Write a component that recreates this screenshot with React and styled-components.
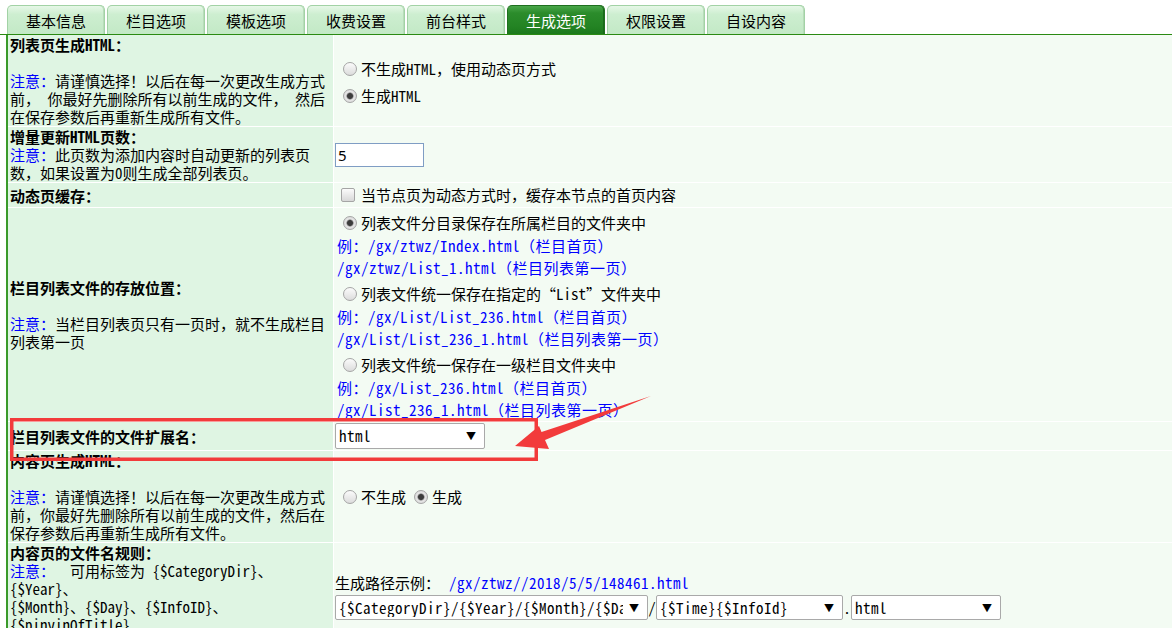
import React from 'react';
import styled, { createGlobalStyle } from 'styled-components';

const GlobalStyle = createGlobalStyle`
  html, body {
    margin: 0;
    padding: 0;
    background: #fff;
  }
  body {
    font-family: "Noto Sans Mono CJK SC", "Noto Sans CJK SC", monospace;
    font-size: 15px;
    color: #000;
  }
`;

const tabs = ['基本信息', '栏目选项', '模板选项', '收费设置', '前台样式', '生成选项', '权限设置', '自设内容'];

const App = () => {
  return (
    <Page>
      <GlobalStyle />
      <TabBar>
        {tabs.map((t) => (
          <Tab key={t} $active={t === '生成选项'}>{t}</Tab>
        ))}
      </TabBar>

      <Form>
        {/* 列表页生成HTML */}
        <Row>
          <Label>
            <div>
              <b>列表页生成HTML：</b><br /><br />
              <Note>注意：</Note>请谨慎选择！以后在每一次更改生成方式<br />
              前， 你最好先删除所有以前生成的文件， 然后<br />
              在保存参数后再重新生成所有文件。
            </div>
          </Label>
          <Field>
            <div>
              <RadioLine><Radio />不生成HTML，使用动态页方式</RadioLine>
              <RadioLine><Radio $checked />生成HTML</RadioLine>
            </div>
          </Field>
        </Row>

        {/* 增量更新 */}
        <Row>
          <Label>
            <div>
              <b>增量更新HTML页数：</b><br />
              <Note>注意：</Note>此页数为添加内容时自动更新的列表页<br />
              数，如果设置为0则生成全部列表页。
            </div>
          </Label>
          <Field>
            <TextBox>5</TextBox>
          </Field>
        </Row>

        {/* 动态页缓存 */}
        <Row>
          <Label>
            <div><b>动态页缓存：</b></div>
          </Label>
          <Field>
            <CheckLine><Check />当节点页为动态方式时，缓存本节点的首页内容</CheckLine>
          </Field>
        </Row>

        {/* 存放位置 */}
        <Row>
          <Label>
            <div>
              <b>栏目列表文件的存放位置：</b><br /><br />
              <Note>注意：</Note>当栏目列表页只有一页时，就不生成栏目<br />
              列表第一页
            </div>
          </Label>
          <Field>
            <div>
              <RadioLine><Radio $checked />列表文件分目录保存在所属栏目的文件夹中</RadioLine>
              <LinkLine>例：/gx/ztwz/Index.html（栏目首页）</LinkLine>
              <LinkLine>/gx/ztwz/List_1.html（栏目列表第一页）</LinkLine>
              <RadioLine><Radio />列表文件统一保存在指定的“List”文件夹中</RadioLine>
              <LinkLine>例：/gx/List/List_236.html（栏目首页）</LinkLine>
              <LinkLine>/gx/List/List_236_1.html（栏目列表第一页）</LinkLine>
              <RadioLine><Radio />列表文件统一保存在一级栏目文件夹中</RadioLine>
              <LinkLine>例：/gx/List_236.html（栏目首页）</LinkLine>
              <LinkLine>/gx/List_236_1.html（栏目列表第一页）</LinkLine>
            </div>
          </Field>
        </Row>

        {/* 扩展名 */}
        <Row>
          <Label>
            <div><b>栏目列表文件的文件扩展名：</b></div>
          </Label>
          <Field>
            <SelectBox $w={150} $h={26}>
              <SelectText>html</SelectText>
              <Arrow>▼</Arrow>
            </SelectBox>
          </Field>
        </Row>

        {/* 内容页生成HTML */}
        <Row>
          <Label>
            <div>
              <b>内容页生成HTML：</b><br /><br />
              <Note>注意：</Note>请谨慎选择！以后在每一次更改生成方式<br />
              前，你最好先删除所有以前生成的文件，然后在<br />
              保存参数后再重新生成所有文件。
            </div>
          </Label>
          <Field>
            <InlineRadios>
              <Radio />不生成
              <Radio $checked />生成
            </InlineRadios>
          </Field>
        </Row>

        {/* 文件名规则 */}
        <Row>
          <Label>
            <div>
              <b>内容页的文件名规则：</b><br />
              <Note>注意：</Note>&nbsp; 可用标签为 {'{$CategoryDir}'}、<br />
              {'{$Year}'}、<br />
              {'{$Month}'}、{'{$Day}'}、{'{$InfoID}'}、<br />
              {'{$pinyinOfTitle}'}、<br />
              {'{$Time}'}
            </div>
          </Label>
          <Field>
            <div>
              <PathLine>生成路径示例：<PathLink>/gx/ztwz//2018/5/5/148461.html</PathLink></PathLine>
              <SelectRow>
                <SelectBox $w={313} $h={25}>
                  <SelectText>{'{$CategoryDir}/{$Year}/{$Month}/{$Day}'}</SelectText>
                  <Arrow>▼</Arrow>
                </SelectBox>
                <Sep>/</Sep>
                <SelectBox $w={187} $h={25}>
                  <SelectText>{'{$Time}{$InfoId}'}</SelectText>
                  <Arrow>▼</Arrow>
                </SelectBox>
                <Sep>.</Sep>
                <SelectBox $w={150} $h={25}>
                  <SelectText>html</SelectText>
                  <Arrow>▼</Arrow>
                </SelectBox>
              </SelectRow>
            </div>
          </Field>
        </Row>
      </Form>

      <Markup width="1172" height="628" viewBox="0 0 1172 628">
        <rect x="11.75" y="419.75" width="524.5" height="39.5" fill="none" stroke="#f23b3b" strokeWidth="3.5" />
        <polygon
          points="515,446 539,426 541.5,432 651,396 545,440 549,449"
          fill="#f23b3b"
        />
      </Markup>
    </Page>
  );
};

export default App;

const Page = styled.div`
  position: relative;
  width: 1172px;
  height: 628px;
  overflow: hidden;
`;

const TabBar = styled.div`
  display: flex;
  gap: 2px;
  padding: 5px 0 0 7px;
  border-bottom: 1px solid #2a8a12;
`;

const Tab = styled.div`
  box-sizing: border-box;
  width: 98px;
  height: 29px;
  display: flex;
  align-items: center;
  justify-content: center;
  font-family: "Noto Sans CJK SC", sans-serif;
  font-size: 15px;
  border: 1px solid ${(p) => (p.$active ? '#1f6f1f' : '#a2d2a5')};
  border-bottom: none;
  border-radius: 5px 5px 0 0;
  color: ${(p) => (p.$active ? '#fff' : '#000')};
  background: ${(p) =>
    p.$active
      ? 'linear-gradient(#4aa64a 0%, #2b8c2b 25%, #248424 70%, #1c7a1c 100%)'
      : 'linear-gradient(#e6f7e7 0%, #cdeed0 30%, #c3e9c6 100%)'};
  box-shadow: inset -1px 0 0 ${(p) => (p.$active ? '#1a6a1a' : '#b8dcba')};
`;

const Form = styled.div`
  margin-left: 6px;
  border-left: 2px solid #3a9a2a;
`;

const Row = styled.div`
  display: grid;
  grid-template-columns: 325px 1fr;
  column-gap: 1px;
  background: #fff;
  border-bottom: 1px solid #fff;
`;

const Label = styled.div`
  display: flex;
  align-items: center;
  background: #dff5e3;
  padding: 1px 2px 0 2px;
  line-height: 18px;
  white-space: nowrap;
  b {
    font-weight: bold;
  }
`;

const Field = styled.div`
  display: flex;
  align-items: center;
  background: #f3fbf3;
  padding-left: 1px;
  line-height: 18px;
  white-space: nowrap;
`;

const Note = styled.span`
  color: #0000ff;
`;

const RadioLine = styled.div`
  display: flex;
  align-items: center;
  height: 24px;
  margin-top: 3px;
`;

const Radio = styled.span`
  box-sizing: border-box;
  display: inline-block;
  width: 14px;
  height: 14px;
  margin: 0 4px 0 8px;
  border-radius: 50%;
  border: 1px solid #a5a5a5;
  background: ${(p) =>
    p.$checked
      ? 'radial-gradient(circle, #3c3c3c 0 2.5px, #8a8a8a 3.2px, #e6e6e6 4px, #d2d2d2 100%)'
      : 'linear-gradient(#fbfbfb, #dcdcdc)'};
`;

const Check = styled.span`
  box-sizing: border-box;
  display: inline-block;
  width: 14px;
  height: 14px;
  margin: 0 6px 0 6px;
  border-radius: 2px;
  border: 1px solid #a5a5a5;
  background: linear-gradient(#fbfbfb, #d8d8d8);
`;

const CheckLine = styled.div`
  display: flex;
  align-items: center;
  height: 24px;
`;

const LinkLine = styled.div`
  height: 22px;
  line-height: 22px;
  padding-left: 2px;
  letter-spacing: 0.5px;
  color: #0000ff;
`;

const InlineRadios = styled.div`
  display: flex;
  align-items: center;
  height: 24px;
`;

const TextBox = styled.div`
  box-sizing: border-box;
  width: 89px;
  height: 24px;
  border: 1px solid #7f9dc4;
  background: #fff;
  padding-left: 2px;
  line-height: 22px;
  font-family: "Noto Sans", sans-serif;
`;

const SelectBox = styled.div`
  box-sizing: border-box;
  display: flex;
  align-items: center;
  width: ${(p) => p.$w}px;
  height: ${(p) => p.$h}px;
  margin: 1px 0;
  padding: 0 8px 0 3px;
  border: 1px solid #a9a9a9;
  border-radius: 2px;
  background: #fff;
`;

const SelectText = styled.span`
  flex: 1;
  overflow: hidden;
  white-space: nowrap;
  letter-spacing: 0.5px;
`;

const Arrow = styled.span`
  margin-left: 6px;
  font-size: 10px;
  color: #000;
`;

const PathLine = styled.div`
  height: 18px;
  margin-bottom: 2px;
`;

const PathLink = styled.span`
  margin-left: 9px;
  letter-spacing: 0.5px;
  color: #0000ff;
`;

const SelectRow = styled.div`
  display: flex;
  align-items: center;
`;

const Sep = styled.span`
  width: 8px;
  text-align: center;
`;

const Markup = styled.svg`
  position: absolute;
  left: 0;
  top: 0;
  pointer-events: none;
`;
